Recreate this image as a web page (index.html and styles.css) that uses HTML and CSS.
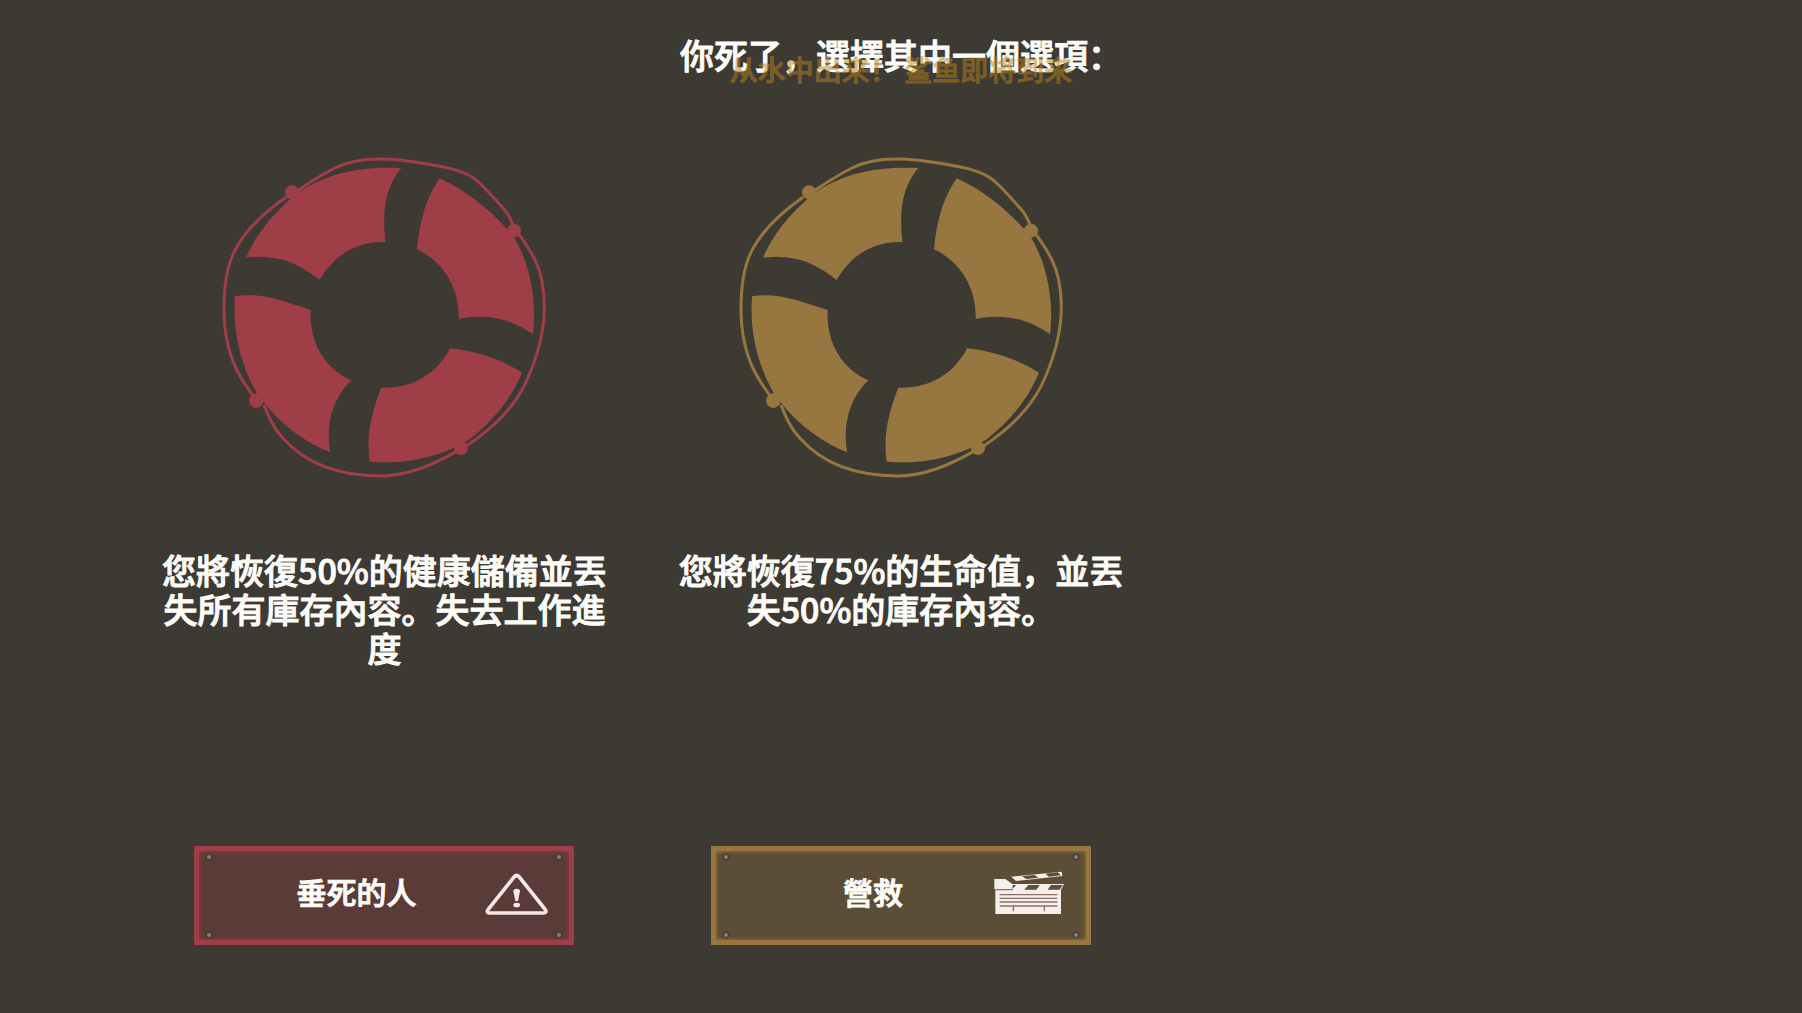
FILE: index.html
```html
<!DOCTYPE html>
<html lang="zh">

<head>
    <meta charset="UTF-8">
    <meta name="viewport" content="width=device-width, initial-scale=1.0">
    <title>你死了</title>
    <link rel="stylesheet" href="styles.css">
</head>

<body>
    <!-- ring shape shared by all cards -->
    <svg class="shapes" aria-hidden="true">
        <symbol id="lifebuoy" viewBox="0 0 1050 1035">
            <path class="rope" d="M232 156 C160 206 110 260 84 305 C52 358 45 430 45 490 C45 570 62 630 82 672 C98 706 116 728 132 752 M165 780 C178 812 190 845 222 880 C280 945 370 993 515 993 C600 993 690 950 748 916 M768 906 C850 852 912 790 946 722 C985 640 1007 560 1006 480 C1005 430 998 385 978 345 C964 316 945 290 930 268 M914 245 C906 222 898 206 882 189 C850 155 832 130 800 104 C765 76 715 68 660 58 C610 49 570 42 510 42 C450 42 412 52 378 69 C340 88 305 110 264 138"/>
            <path d="M577 69 C440 62 348 90 272 139 L240 166 C190 211 140 270 111 338 C205 326 270 355 332 405 C378 326 445 289 529 291 C520 200 526 130 577 69Z"/>
            <path d="M692 100 C770 135 838 190 892 250 L918 282 C960 355 985 460 972 568 C905 520 830 505 749 522 C752 435 708 352 624 313 C632 230 650 160 692 100Z"/>
            <path d="M78 454 C150 440 230 470 305 495 C300 590 345 670 427 706 C365 765 350 850 364 922 C290 893 220 840 172 782 L142 742 C95 660 70 560 78 454Z"/>
            <path d="M723 610 C800 618 875 642 939 683 C905 765 850 830 780 884 L735 908 C655 945 570 957 482 950 C470 870 490 795 517 728 C605 732 683 690 723 610Z"/>
            <circle cx="249" cy="142" r="21"/>
            <circle cx="915" cy="257" r="21"/>
            <circle cx="142" cy="767" r="22"/>
            <circle cx="756" cy="909" r="21"/>
        </symbol>
    </svg>

    <header class="header">
        <h1>你死了，選擇其中一個選項：</h1>
        <p class="warning">从水中出来！ 鲨鱼即将到来</p>
    </header>

    <main class="options">
        <section class="option red">
            <svg class="ring" aria-hidden="true"><use href="#lifebuoy"/></svg>
            <p class="text">您將恢復50%的健康儲備並丟失所有庫存內容。失去工作進度</p>
            <button type="button" class="btn">
                <span class="label">垂死的人</span>
                <svg class="icon" viewBox="12 9 228 180" aria-hidden="true">
                    <path d="M121 50 Q128 43 135 50 L214 149 Q219 159 208 159 L47 159 Q36 158 42 149Z" fill="none" stroke="currentColor" stroke-width="11" stroke-linejoin="round"/>
                    <path d="M118 94 Q118 86 128 86 Q138 86 138 94 L132 123 L124 123Z" fill="currentColor"/>
                    <ellipse cx="128" cy="135" rx="10" ry="7" fill="currentColor"/>
                </svg>
            </button>
        </section>

        <section class="option gold">
            <svg class="ring" aria-hidden="true"><use href="#lifebuoy"/></svg>
            <p class="text">您將恢復75%的生命值，並丟失50%的庫存內容。</p>
            <button type="button" class="btn">
                <span class="label">營救</span>
                <svg class="icon" viewBox="30 9 228 180" aria-hidden="true">
                    <path d="M28 57 L61 57 L82 72 L237 72 L228 89 L228 162 L31 162 L31 88 L28 88Z" fill="currentColor"/>
                    <path d="M79 50 L230 35 L232 48 L93 63Z" fill="currentColor"/>
                    <g class="stripe">
                        <path d="M111 49 L148 45 L160 53 L124 57Z"/>
                        <path d="M181 41 L218 37 L228 46 L192 50Z"/>
                        <path d="M83 75 L93 75 L83 87Z"/>
                        <path d="M130 75 L164 75 L154 89 L118 89Z"/>
                        <path d="M198 75 L233 75 L224 89 L188 89Z"/>
                    </g>
                    <path class="lines" d="M31 89 H84 M44 104 H217 M44 115 H217 M44 126 H217 M44 138 H217 M85 138 V154 M178 138 V154"/>
                </svg>
            </button>
        </section>
    </main>
</body>

</html>
```
FILE: styles.css
```css
*{
    margin: 0;
    padding: 0;
    box-sizing: border-box;
}
:root{
    --background: #3d3a33;
    --color: #fdfcf8;
    --red: #a03e48;
    --red-fill: #5b3b38;
    --gold: #97763f;
    --gold-fill: #5c4d36;
}
body{
    min-height: 100vh;
    background-color: var(--background);
    color: var(--color);
    font-family: "Noto Sans CJK SC", sans-serif;
    font-weight: 500;
    -webkit-text-stroke: 1px;
}
.shapes{
    position: absolute;
    width: 0;
    height: 0;
}
.header{
    position: relative;
    padding: 35px 20px 70px;
    text-align: center;
}
.header h1{
    font-size: 34px;
    font-weight: 500;
    line-height: 40px;
}
/* fading game message, lies over the title */
.warning{
    position: absolute;
    top: 49px;
    left: 0;
    right: 0;
    font-size: 28px;
    line-height: 40px;
    color: #b8821a;
    opacity: 0.5;
}
.options{
    display: grid;
    grid-template-columns: repeat(3, 1fr);
    padding: 0 7% 60px;
}
.option{
    display: flex;
    flex-direction: column;
    align-items: center;
}
.red{
    --accent: var(--red);
    --fill: var(--red-fill);
    --icon: #f8e9e6;
}
.gold{
    --accent: var(--gold);
    --fill: var(--gold-fill);
    --icon: #f4efea;
}
.ring{
    width: 350px;
    max-width: 100%;
    height: 345px;
    fill: var(--accent);
}
.rope{
    fill: none;
    stroke: var(--accent);
    stroke-width: 9;
}
.text{
    min-height: 296px;
    margin-top: 60px;
    padding: 0 32px;
    font-size: 34px;
    line-height: 39px;
    text-align: center;
}
.btn{
    display: flex;
    align-items: center;
    width: 380px;
    max-width: 100%;
    height: 99px;
    padding: 0 15px 6px 35px;
    border: 5px solid var(--accent);
    background:
        radial-gradient(circle at 10px 6px, #8a8580 1px, #3a3433 3px, transparent 4px),
        radial-gradient(circle at calc(100% - 10px) 6px, #8a8580 1px, #3a3433 3px, transparent 4px),
        radial-gradient(circle at 10px calc(100% - 5px), #8a8580 1px, #3a3433 3px, transparent 4px),
        radial-gradient(circle at calc(100% - 10px) calc(100% - 5px), #8a8580 1px, #3a3433 3px, transparent 4px),
        var(--fill);
    box-shadow: inset 0 0 5px var(--accent);
    color: var(--color);
    font-family: inherit;
    font-size: 30px;
    font-weight: 500;
    -webkit-text-stroke: 1px;
    cursor: pointer;
}
.btn:hover{
    filter: brightness(1.1);
}
.label{
    flex: 1;
    padding-bottom: 4px;
    text-align: center;
}
.icon{
    width: 76px;
    height: 60px;
    overflow: visible;
    color: var(--icon);
}
.stripe{
    fill: var(--fill);
}
.lines{
    fill: none;
    stroke: #8b6f68;
    stroke-width: 4;
}
```
